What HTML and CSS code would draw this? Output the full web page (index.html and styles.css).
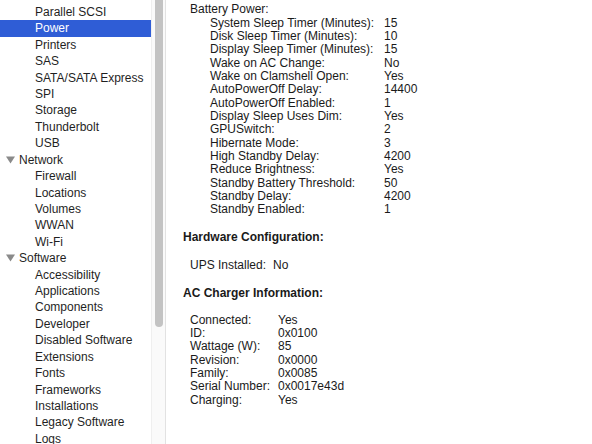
FILE: index.html
```html
<!DOCTYPE html>
<html>
<head>
<meta charset="utf-8">
<link rel="stylesheet" href="styles.css">
</head>
<body>
<div class="window">
  <nav class="sidebar">
    <div class="row item">Parallel SCSI</div>
    <div class="row item selected">Power</div>
    <div class="row item">Printers</div>
    <div class="row item">SAS</div>
    <div class="row item">SATA/SATA Express</div>
    <div class="row item">SPI</div>
    <div class="row item">Storage</div>
    <div class="row item">Thunderbolt</div>
    <div class="row item">USB</div>
    <div class="row group"><svg class="tri" width="9" height="8" viewBox="0 0 9 8"><polygon points="0,0.5 9,0.5 4.5,7.5" fill="#8a8a8a"/></svg>Network</div>
    <div class="row item">Firewall</div>
    <div class="row item">Locations</div>
    <div class="row item">Volumes</div>
    <div class="row item">WWAN</div>
    <div class="row item">Wi-Fi</div>
    <div class="row group"><svg class="tri" width="9" height="8" viewBox="0 0 9 8"><polygon points="0,0.5 9,0.5 4.5,7.5" fill="#8a8a8a"/></svg>Software</div>
    <div class="row item">Accessibility</div>
    <div class="row item">Applications</div>
    <div class="row item">Components</div>
    <div class="row item">Developer</div>
    <div class="row item">Disabled Software</div>
    <div class="row item">Extensions</div>
    <div class="row item">Fonts</div>
    <div class="row item">Frameworks</div>
    <div class="row item">Installations</div>
    <div class="row item">Legacy Software</div>
    <div class="row item">Logs</div>
  </nav>
  <div class="scrolltrack"><div class="thumb"></div></div>
  <main class="content">
    <div class="block">
      <div class="line">Battery Power:</div>
      <div class="kv battery">
        <span>System Sleep Timer (Minutes):</span><span>15</span>
        <span>Disk Sleep Timer (Minutes):</span><span>10</span>
        <span>Display Sleep Timer (Minutes):</span><span>15</span>
        <span>Wake on AC Change:</span><span>No</span>
        <span>Wake on Clamshell Open:</span><span>Yes</span>
        <span>AutoPowerOff Delay:</span><span>14400</span>
        <span>AutoPowerOff Enabled:</span><span>1</span>
        <span>Display Sleep Uses Dim:</span><span>Yes</span>
        <span>GPUSwitch:</span><span>2</span>
        <span>Hibernate Mode:</span><span>3</span>
        <span>High Standby Delay:</span><span>4200</span>
        <span>Reduce Brightness:</span><span>Yes</span>
        <span>Standby Battery Threshold:</span><span>50</span>
        <span>Standby Delay:</span><span>4200</span>
        <span>Standby Enabled:</span><span>1</span>
      </div>
    </div>
    <div class="title">Hardware Configuration:</div>
    <div class="block gap">
      <div class="kv ups">
        <span>UPS Installed:</span><span>No</span>
      </div>
    </div>
    <div class="title">AC Charger Information:</div>
    <div class="block gap2">
      <div class="kv charger">
        <span>Connected:</span><span>Yes</span>
        <span>ID:</span><span>0x0100</span>
        <span>Wattage (W):</span><span>85</span>
        <span>Revision:</span><span>0x0000</span>
        <span>Family:</span><span>0x0085</span>
        <span>Serial Number:</span><span>0x0017e43d</span>
        <span>Charging:</span><span>Yes</span>
      </div>
    </div>
  </main>
</div>
</body>
</html>
```

FILE: styles.css
```css
* { box-sizing: border-box; }
html, body {
  margin: 0;
  padding: 0;
  background: #ffffff;
  overflow: hidden;
}
body {
  font-family: "Liberation Sans", Arial, sans-serif;
  font-size: 12px;
  color: #1d1d1d;
}
.window {
  display: flex;
  width: 592px;
  height: 444px;
  overflow: hidden;
}
.sidebar {
  width: 151px;
  flex: none;
  padding-top: 3.9px;
  background: #ffffff;
}
.row {
  height: 16.43px;
  line-height: 16.43px;
  white-space: nowrap;
  color: #1f1f1f;
}
.item { padding-left: 35px; }
.group {
  display: flex;
  align-items: center;
  padding-left: 6px;
}
.tri {
  margin-right: 4px;
  flex: none;
}
.selected {
  background: #2f5dd6;
  color: #ffffff;
}
.scrolltrack {
  width: 15px;
  flex: none;
  background: #fafafa;
  border-left: 1px solid #efefef;
  border-right: 1px solid #e2e2e2;
  position: relative;
}
.thumb {
  position: absolute;
  left: 3px;
  top: -8px;
  width: 8px;
  height: 335px;
  border-radius: 4px;
  background: #c3c3c3;
}
.content {
  flex: 1;
  padding-left: 17px;
  padding-top: 3.33px;
  line-height: 13.33px;
  color: #1a1a1a;
}
.block { margin-left: 7px; }
.kv {
  display: grid;
  grid-template-columns: 174px auto;
  justify-content: start;
}
.kv span { white-space: nowrap; }
.battery { margin-left: 20px; }
.ups { grid-template-columns: 83px auto; }
.charger { grid-template-columns: 88px auto; }
.title {
  font-weight: bold;
  margin-top: 14.67px;
}
.gap { margin-top: 14.67px; }
.gap2 { margin-top: 13px; }
```
